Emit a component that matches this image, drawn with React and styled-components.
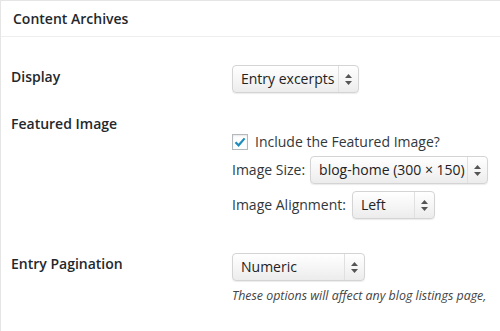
import React from 'react';
import styled, { createGlobalStyle } from 'styled-components';

const GlobalStyle = createGlobalStyle`
  html, body {
    margin: 0;
    padding: 0;
    background: #ffffff;
  }
  body {
    font-family: "Open Sans", "Liberation Sans", sans-serif;
    color: #23282d;
  }
`;

const Box = styled.div`
  width: 500px;
  height: 331px;
  box-sizing: border-box;
  border-top: 1px solid #e5e5e5;
  border-left: 1px solid #e5e5e5;
  background: #fff;
  overflow: hidden;
`;

const Header = styled.h2`
  margin: 0;
  height: 35px;
  line-height: 35px;
  padding: 0 12px;
  font-size: 14px;
  font-weight: 600;
  color: #23282d;
  border-bottom: 1px solid #eeeeee;
`;

const Row = styled.div`
  display: grid;
  grid-template-columns: 221px 1fr;
  padding-left: 10px;
  align-items: start;
`;

const Label = styled.div`
  padding-top: ${({ $offset }) => $offset}px;
  font-size: 14px;
  font-weight: 600;
  line-height: 20px;
  color: #23282d;
`;

const Field = styled.div`
  padding-top: ${({ $offset }) => $offset}px;
  display: flex;
  flex-direction: column;
  align-items: flex-start;
`;

const Line = styled.div`
  display: flex;
  align-items: center;
  gap: ${({ $gap }) => ($gap ? $gap : 6)}px;
  margin-top: ${({ $top }) => ($top ? $top : 0)}px;
  font-size: 14px;
  line-height: 20px;
  color: #32373c;
`;

const Select = styled.div`
  display: flex;
  align-items: stretch;
  width: ${({ $width }) => $width}px;
  height: 28px;
  box-sizing: border-box;
  border: 1px solid #d4d4d4;
  border-radius: 4px;
  background: linear-gradient(#ffffff, #f4f4f4 60%, #ececec);
  box-shadow: 0 1px 1px rgba(0, 0, 0, 0.08);
  font-size: 14px;
  color: #222;
`;

const SelectText = styled.span`
  flex: 1;
  padding-left: 8px;
  line-height: 26px;
  white-space: nowrap;
  overflow: hidden;
`;

const ArrowPart = styled.span`
  width: 19px;
  display: flex;
  align-items: center;
  justify-content: center;
  border-left: 1px solid #e0e0e0;
`;

const Check = styled.span`
  width: 16px;
  height: 16px;
  box-sizing: border-box;
  border: 1px solid #b4b9be;
  background: #fff;
  box-shadow: inset 0 1px 2px rgba(0, 0, 0, 0.1);
  display: flex;
  align-items: center;
  justify-content: center;
`;

const Note = styled.p`
  margin: 6px 0 0;
  font-size: 12.4px;
  font-style: italic;
  line-height: 18px;
  color: #444;
  white-space: nowrap;
`;

const Arrows = () => (
  <svg width="7" height="11" viewBox="0 0 7 11">
    <path d="M3.5 0 L7 4 L0 4 Z" fill="#555" />
    <path d="M3.5 11 L7 7 L0 7 Z" fill="#555" />
  </svg>
);

const Dropdown = ({ width, children }) => (
  <Select $width={width}>
    <SelectText>{children}</SelectText>
    <ArrowPart>
      <Arrows />
    </ArrowPart>
  </Select>
);

const App = () => {
  return (
    <>
      <GlobalStyle />
      <Box>
        <Header>Content Archives</Header>

        <Row>
          <Label $offset={30}>Display</Label>
          <Field $offset={28}>
            <Dropdown width={127}>Entry excerpts</Dropdown>
          </Field>
        </Row>

        <Row>
          <Label $offset={21}>Featured Image</Label>
          <Field $offset={39}>
            <Line $gap={7}>
              <Check>
                <svg width="14" height="14" viewBox="0 0 14 14">
                  <path d="M2.5 7.2 L5.6 10.3 L11.6 3.4" fill="none" stroke="#1e8cbe" strokeWidth="2.2" />
                </svg>
              </Check>
              Include the Featured Image?
            </Line>
            <Line $top={4} $gap={5}>
              Image Size:
              <Dropdown width={178}>blog-home (300 × 150)</Dropdown>
            </Line>
            <Line $top={7}>
              Image Alignment:
              <Dropdown width={83}>Left</Dropdown>
            </Line>
          </Field>
        </Row>

        <Row>
          <Label $offset={35}>Entry Pagination</Label>
          <Field $offset={34}>
            <Dropdown width={133}>Numeric</Dropdown>
            <Note>These options will affect any blog listings page,</Note>
          </Field>
        </Row>
      </Box>
    </>
  );
};

export default App;
